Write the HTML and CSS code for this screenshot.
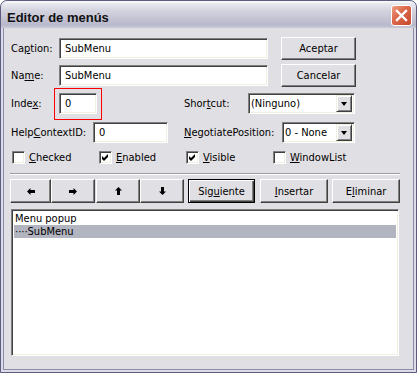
FILE: index.html
```html
<!DOCTYPE html>
<html lang="es">
<head>
    <meta charset="UTF-8">
    <title>Editor de menús</title>
    <link rel="stylesheet" href="styles.css">
</head>
<body>
    <div class="window">
        <div class="titlebar">
            <span class="title">Editor de menús</span>
            <span class="close-btn">
                <svg width="21" height="21" viewBox="0 0 21 21">
                    <path d="M6 6 L15 15 M15 6 L6 15" stroke="#fff" stroke-width="2.4" stroke-linecap="square"/>
                </svg>
            </span>
        </div>

        <div class="dialog">
            <div class="row row-btn">
                <label class="lbl lbl-a">Ca<u>p</u>tion:</label>
                <input class="textbox tb-wide" type="text" value="SubMenu">
                <button class="btn btn-side">Aceptar</button>
            </div>
            <div class="row row-btn row-2">
                <label class="lbl lbl-a">Na<u>m</u>e:</label>
                <input class="textbox tb-wide" type="text" value="SubMenu">
                <button class="btn btn-side">Cancelar</button>
            </div>
            <div class="row row-3">
                <label class="lbl lbl-a">Inde<u>x</u>:</label>
                <div class="index-wrap">
                    <input class="textbox tb-index" type="text" value="0">
                </div>
                <label class="lbl lbl-shortcut">Shor<u>t</u>cut:</label>
                <div class="combo combo-shortcut">
                    <span class="combo-value">(Ninguno)</span>
                    <span class="combo-arrow"><span class="tri"></span></span>
                </div>
            </div>
            <div class="row row-4">
                <label class="lbl lbl-help">Help<u>C</u>ontextID:</label>
                <input class="textbox tb-help" type="text" value="0">
                <label class="lbl lbl-nego"><u>N</u>egotiatePosition:</label>
                <div class="combo combo-nego">
                    <span class="combo-value">0 - None</span>
                    <span class="combo-arrow"><span class="tri"></span></span>
                </div>
            </div>
            <div class="row row-checks">
                <div class="check-item">
                    <span class="check"></span>
                    <span><u>C</u>hecked</span>
                </div>
                <div class="check-item">
                    <span class="check">
                        <svg width="11" height="11" viewBox="0 0 11 11"><polygon points="2,4 4,6 8,2 8,5 4,9 2,7" fill="#000"/></svg>
                    </span>
                    <span><u>E</u>nabled</span>
                </div>
                <div class="check-item">
                    <span class="check">
                        <svg width="11" height="11" viewBox="0 0 11 11"><polygon points="2,4 4,6 8,2 8,5 4,9 2,7" fill="#000"/></svg>
                    </span>
                    <span><u>V</u>isible</span>
                </div>
                <div class="check-item">
                    <span class="check"></span>
                    <span><u>W</u>indowList</span>
                </div>
            </div>

            <div class="separator"></div>

            <div class="toolbar">
                <button class="btn arrow-btn arrow-first">
                    <svg width="8" height="7" viewBox="0 0 8 7"><polygon points="0,3.5 3.5,0 3.5,2 8,2 8,5 3.5,5 3.5,7" fill="#000"/></svg>
                </button>
                <button class="btn arrow-btn">
                    <svg width="8" height="7" viewBox="0 0 8 7"><polygon points="8,3.5 4.5,0 4.5,2 0,2 0,5 4.5,5 4.5,7" fill="#000"/></svg>
                </button>
                <button class="btn arrow-btn arrow-gap">
                    <svg width="7" height="8" viewBox="0 0 7 8"><polygon points="3.5,0 7,3.5 5,3.5 5,8 2,8 2,3.5 0,3.5" fill="#000"/></svg>
                </button>
                <button class="btn arrow-btn">
                    <svg width="7" height="8" viewBox="0 0 7 8"><polygon points="3.5,8 7,4.5 5,4.5 5,0 2,0 2,4.5 0,4.5" fill="#000"/></svg>
                </button>
                <button class="btn btn-default">Sig<u>u</u>iente</button>
                <button class="btn btn-tool btn-insert"><u>I</u>nsertar</button>
                <button class="btn btn-tool">E<u>l</u>iminar</button>
            </div>

            <div class="listbox">
                <div class="list-item">Menu popup</div>
                <div class="list-item selected">····SubMenu</div>
            </div>
        </div>
    </div>
</body>
</html>
```

FILE: styles.css
```css
body {
    margin: 0;
    background: #fff;
    font-family: "DejaVu Sans Condensed", "DejaVu Sans", sans-serif;
    font-size: 11px;
    color: #000;
}
.window {
    width: 417px;
    height: 373px;
    box-sizing: border-box;
    background: #e0dfe3;
    border: 1px solid #5c5c80;
    border-radius: 7px 7px 0 0;
    box-shadow: inset 0 0 0 2px #dcdce8, inset 0 0 0 3px #8c8ca8;
    overflow: hidden;
}
.titlebar {
    height: 27px;
    display: flex;
    justify-content: space-between;
    align-items: flex-start;
    background: linear-gradient(#fdfdfe 0%, #e8e8f0 10%, #d4d4e0 35%, #c4c4d4 65%, #b8b8cc 88%, #cacad8 100%);
    border-radius: 6px 6px 0 0;
}
.title {
    font-family: "Liberation Sans", Arial, sans-serif;
    font-weight: bold;
    font-size: 13px;
    line-height: 15px;
    margin: 9px 0 0 6px;
    color: #111;
}
.close-btn {
    width: 21px;
    height: 21px;
    margin: 4px 4px 0 0;
    box-sizing: border-box;
    border: 1px solid #fff;
    border-radius: 3px;
    background: linear-gradient(135deg, #eea088 0%, #dc6a4c 40%, #c8472c 100%);
    display: flex;
    align-items: center;
    justify-content: center;
}
.close-btn svg {
    margin: -1px;
}
.dialog {
    padding: 9px 0 0 10px;
}
.row {
    display: flex;
    align-items: center;
}
.row-btn {
    height: 23px;
}
.row-2 {
    margin-top: 4px;
}
.row-3 {
    margin-top: 6px;
    height: 21px;
}
.row-4 {
    margin-top: 8px;
    height: 21px;
}
.lbl {
    white-space: nowrap;
}
.lbl-a {
    width: 48px;
}
.lbl-shortcut {
    width: 64px;
    margin-left: 87px;
}
.lbl-help {
    width: 82px;
}
.lbl-nego {
    width: 98px;
    margin-left: 16px;
}
.textbox {
    box-sizing: border-box;
    height: 21px;
    margin: 0;
    padding: 0 0 0 5px;
    border: 1px solid;
    border-color: #808080 #fff #fff #808080;
    box-shadow: inset 1px 1px #404040, inset -1px -1px #f1efe2;
    background: #fff;
    font: inherit;
    color: #000;
    outline: none;
}
.tb-wide {
    width: 209px;
}
.tb-index {
    width: 38px;
}
.tb-help {
    width: 75px;
}
.index-wrap {
    position: relative;
    width: 38px;
    height: 21px;
}
.index-wrap::after {
    content: "";
    position: absolute;
    left: -5px;
    top: -5px;
    right: -5px;
    bottom: -6px;
    border: 1px solid #f00;
}
.btn {
    box-sizing: border-box;
    margin: 0;
    padding: 0;
    background: #e0dfe3;
    border: 1px solid;
    border-color: #fff #404040 #404040 #fff;
    box-shadow: inset -1px -1px #808080;
    font: inherit;
    color: #000;
    display: flex;
    align-items: center;
    justify-content: center;
}
.btn-side {
    width: 75px;
    height: 23px;
    margin-left: 13px;
}
.combo {
    box-sizing: border-box;
    height: 21px;
    display: flex;
    align-items: center;
    justify-content: space-between;
    border: 1px solid;
    border-color: #808080 #fff #fff #808080;
    box-shadow: inset 1px 1px #404040, inset -1px -1px #f1efe2;
    background: #fff;
    padding: 1px 2px 1px 1px;
}
.combo-shortcut {
    width: 107px;
}
.combo-nego {
    width: 73px;
}
.combo-value {
    padding-left: 1px;
    white-space: nowrap;
}
.combo-arrow {
    box-sizing: border-box;
    width: 16px;
    height: 17px;
    background: #e0dfe3;
    border: 1px solid;
    border-color: #f1efe2 #404040 #404040 #f1efe2;
    box-shadow: inset 1px 1px #fff, inset -1px -1px #808080;
    display: flex;
    align-items: center;
    justify-content: center;
}
.tri {
    width: 0;
    height: 0;
    border-left: 3.5px solid transparent;
    border-right: 3.5px solid transparent;
    border-top: 4px solid #000;
    margin-top: 1px;
}
.row-checks {
    margin-top: 8px;
    height: 13px;
    padding-left: 1px;
}
.check-item {
    width: 87px;
    display: flex;
    align-items: center;
}
.check {
    box-sizing: border-box;
    width: 13px;
    height: 13px;
    margin-right: 4px;
    background: #fff;
    border: 1px solid;
    border-color: #808080 #fff #fff #808080;
    box-shadow: inset 1px 1px #404040, inset -1px -1px #f1efe2;
    display: flex;
    align-items: center;
    justify-content: center;
}
.separator {
    width: 390px;
    margin: 9px 0 0 -1px;
    border-top: 1px solid #9d9da1;
    border-bottom: 1px solid #fff;
}
.toolbar {
    display: flex;
    margin: 4px 0 0 -1px;
    height: 24px;
}
.toolbar .btn {
    height: 24px;
}
.arrow-btn {
    width: 44px;
}
.arrow-first {
    width: 41px;
}
.arrow-gap {
    margin-left: 1px;
}
.btn-default {
    width: 67px;
    margin-left: 4px;
    border: 1px solid #000;
    box-shadow: inset 1px 1px #fff, inset -1px -1px #404040, inset -2px -2px #808080;
}
.btn-tool {
    width: 68px;
    margin-left: 4px;
}
.btn-insert {
    margin-left: 5px;
}
.listbox {
    box-sizing: border-box;
    width: 388px;
    height: 147px;
    margin-top: 6px;
    padding: 2px;
    background: #fff;
    border: 1px solid;
    border-color: #808080 #fff #fff #808080;
    box-shadow: inset 1px 1px #404040, inset -1px -1px #f1efe2;
}
.list-item {
    height: 13px;
    line-height: 13px;
    padding-left: 1px;
    white-space: nowrap;
}
.list-item.selected {
    background: #b2b4bf;
}
```
